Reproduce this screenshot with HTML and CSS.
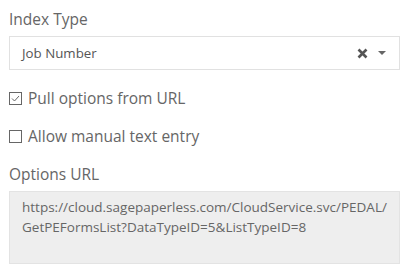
FILE: index.html
```html
<!DOCTYPE html>
<html lang="en">
  <head>
    <meta charset="utf-8" />
    <meta name="viewport" content="width=device-width" />
    <title>Index settings</title>
    <link rel="stylesheet" href="styles.css">
  </head>

  <body>
    <section class="panel">
      <div class="field-label">Index Type</div>
      <div class="select">
        <span class="select-value">Job Number</span>
        <span class="select-clear">
          <svg width="11" height="11" viewBox="0 0 11 11">
            <path d="M1.5 1.5 L9.5 9.5 M9.5 1.5 L1.5 9.5" stroke="#555" stroke-width="2.6" stroke-linecap="butt" />
          </svg>
        </span>
        <span class="select-arrow"></span>
      </div>

      <label class="check-row first">
        <span class="check-box">
          <svg width="13" height="13" viewBox="0 0 13 13">
            <rect x="0.5" y="0.5" width="12" height="12" fill="#fff" stroke="#666" />
            <path d="M3 6.5 L5.5 9 L10 4" fill="none" stroke="#666" stroke-width="1" />
          </svg>
        </span>
        Pull options from URL
      </label>

      <label class="check-row">
        <span class="check-box">
          <svg width="13" height="13" viewBox="0 0 13 13">
            <rect x="0.5" y="0.5" width="12" height="12" fill="#fff" stroke="#666" />
          </svg>
        </span>
        Allow manual text entry
      </label>

      <div class="field-label spaced">Options URL</div>
      <div class="url-box">https://cloud.sagepaperless.com/CloudService.svc/PEDAL/<wbr>GetPEFormsList?DataTypeID=5&amp;ListTypeID=8</div>
    </section>
  </body>
</html>
```

FILE: styles.css
```css
html {
  box-sizing: border-box;
}

* {
  box-sizing: inherit;
}

body {
  margin: 0;
  background-color: #fff;
  color: #666;
  font-family: "Open Sans", "Noto Sans", sans-serif;
}

.panel {
  padding: 8px 14px 0 9px;
}

.field-label {
  font-size: 15.5px;
  line-height: 22px;
  color: #666;
  margin-bottom: 6px;
}

.field-label.spaced {
  margin-top: 16px;
}

.select {
  display: flex;
  align-items: center;
  height: 34px;
  border: 1px solid #e1e1e1;
  padding: 0 12px 0 12px;
  background-color: #fff;
}

.select-value {
  flex-grow: 1;
  font-size: 13.3px;
  color: #555;
}

.select-clear {
  display: flex;
  margin-right: 10px;
}

.select-arrow {
  width: 0;
  height: 0;
  border-left: 4px solid transparent;
  border-right: 4px solid transparent;
  border-top: 4px solid #666;
  margin-right: 1px;
}

.check-row {
  display: flex;
  align-items: center;
  font-size: 15.5px;
  line-height: 22px;
  color: #666;
  margin-top: 16px;
}

.check-row.first {
  margin-top: 17px;
}

.check-box {
  display: flex;
  margin-right: 6px;
}

.url-box {
  height: 73px;
  border: 1px solid #e3e3e3;
  background-color: #eee;
  padding: 5px 12px;
  font-size: 13.5px;
  line-height: 20px;
  color: #666;
}
```
